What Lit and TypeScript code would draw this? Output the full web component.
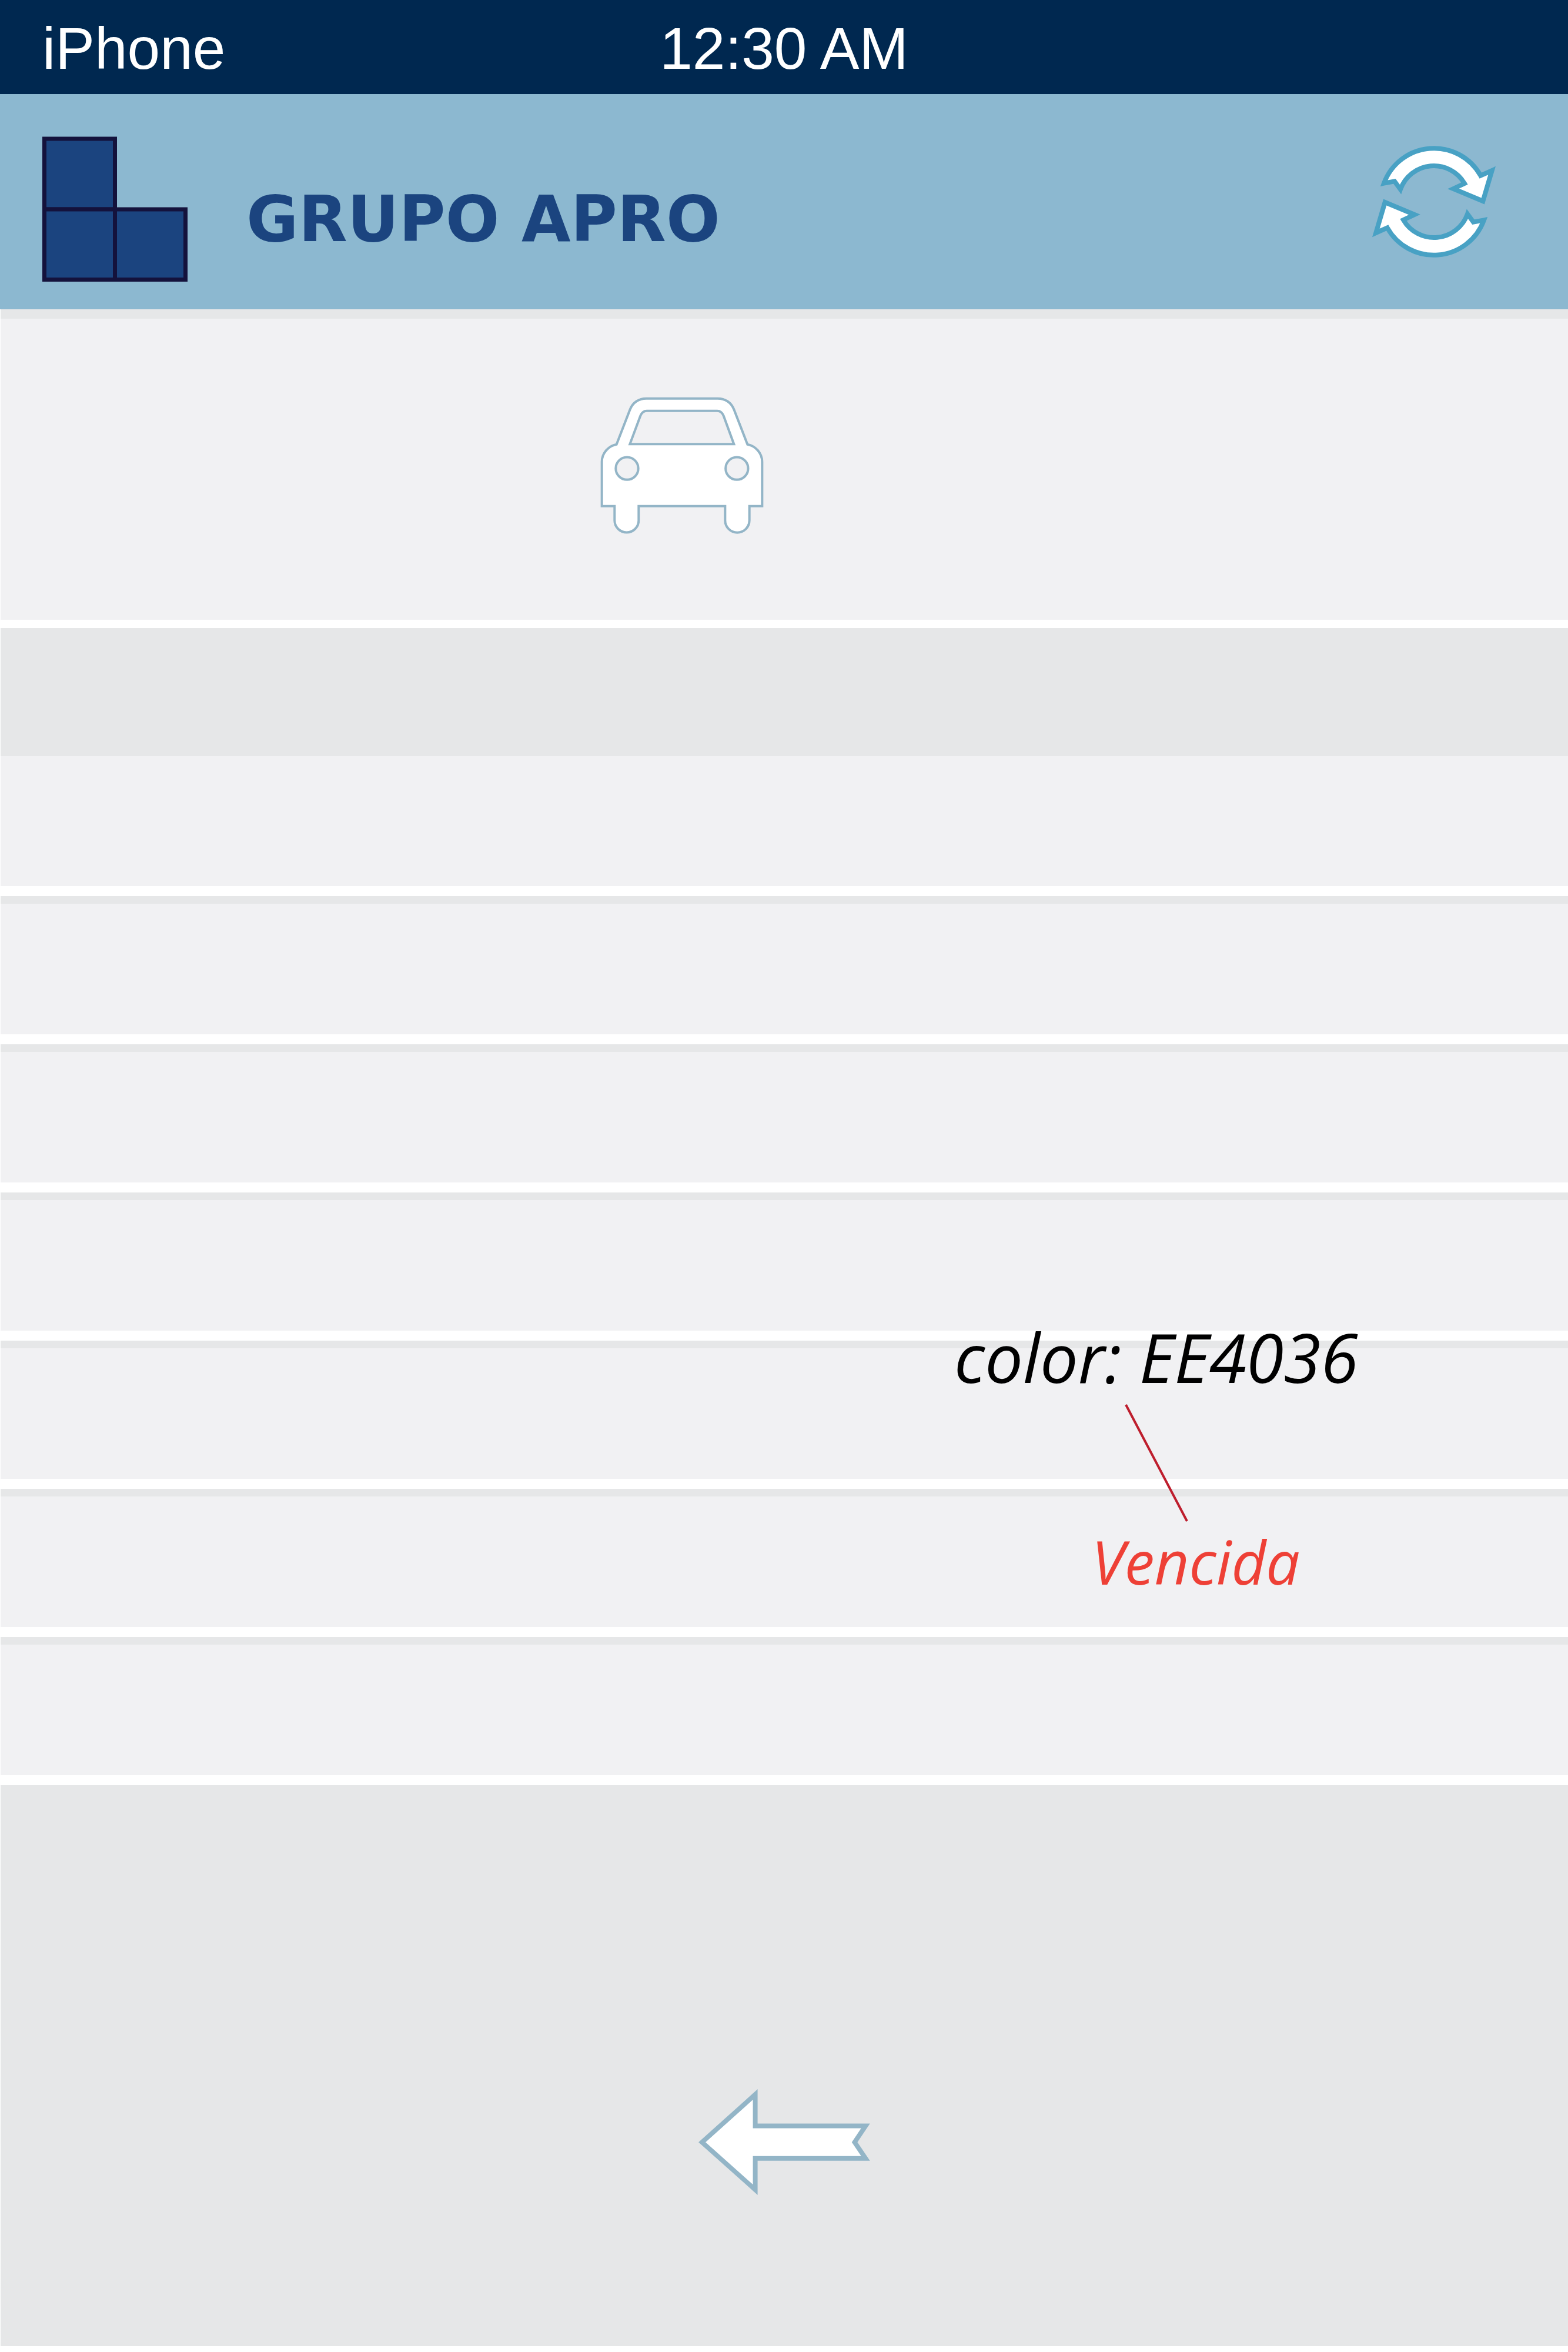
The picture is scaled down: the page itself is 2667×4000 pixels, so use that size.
import { LitElement, html, css } from "lit";
import { customElement, property } from "lit/decorators.js";

@customElement("status-bar")
class StatusBar extends LitElement {
  static styles = css`
    :host {
      display: grid;
      grid-template-columns: 1fr auto 1fr;
      align-items: center;
      height: 160px;
      padding: 4px 72px 0;
      box-sizing: border-box;
      background: #002850;
      color: #fff;
      font: 100px/120px "Liberation Sans", Arial, sans-serif;
    }
  `;
  @property() device = "";
  @property() time = "";
  render() {
    return html`<span>${this.device}</span><time>${this.time}</time>`;
  }
}

@customElement("brand-header")
class BrandHeader extends LitElement {
  static styles = css`
    :host {
      display: flex;
      align-items: center;
      height: 366px;
      padding: 0 122px 0 72px;
      box-sizing: border-box;
      background: #8cb8d0;
    }
    .logo {
      width: 247px;
      height: 247px;
      margin-top: 24px;
      fill: #1b447f;
      stroke: #14123c;
      stroke-width: 7;
    }
    .name {
      flex: 1;
      margin: 60px 0 0 100px;
      color: #1b447f;
      font: bold 108px/120px "DejaVu Sans", Verdana, sans-serif;
      white-space: nowrap;
    }
    .refresh {
      padding: 0;
      border: 0;
      background: none;
      cursor: pointer;
    }
    .refresh svg {
      display: block;
      width: 212px;
      height: 190px;
    }
    .arrows {
      fill: #fff;
      stroke: #48a1c4;
      stroke-width: 24;
      stroke-miterlimit: 10;
    }
  `;
  render() {
    const arrow =
      "M133 274 L187 264 L217 305 A181 181 0 0 1 544 275 L487 302 L638 365 L684 209 L626 235 A272 272 0 0 0 133 274Z";
    return html`
      <svg class="logo" viewBox="0 0 247 247" aria-hidden="true">
        <rect x="3.5" y="4" width="120" height="120" />
        <rect x="3.5" y="124" width="120" height="119.5" />
        <rect x="123.5" y="124" width="120" height="119.5" />
      </svg>
      <h1 class="name">GRUPO APRO</h1>
      <button class="refresh" type="button" aria-label="Actualizar">
        <svg viewBox="70 83 636 570" aria-hidden="true">
          <g class="arrows">
            <path d=${arrow} />
            <path d=${arrow} transform="rotate(180 388 368)" />
          </g>
        </svg>
      </button>
    `;
  }
}

@customElement("car-icon")
class CarIcon extends LitElement {
  static styles = css`
    :host {
      display: block;
    }
    svg {
      display: block;
      width: 278px;
      height: 233px;
      fill: #fff;
      stroke: #93b5c7;
      stroke-width: 12;
    }
    .hole {
      fill: #f1f1f3;
    }
  `;
  render() {
    return html`
      <svg viewBox="65 76 834 699" aria-hidden="true">
        <path
          d="M73 633V407C73 364 106 326 148 318L217 140C231 104 262 84 300 84H664C702 84 733 104 747 140L816 318C858 326 891 364 891 407V633H826V706A62 62 0 0 1 702 706V633H261V706A61.5 61.5 0 0 1 138 706V633Z"
        />
        <path
          class="hole"
          d="M216 317L270 172C277 155 286 147 302 147H662C678 147 687 155 694 172L747 317Z"
        />
        <circle class="hole" cx="201.5" cy="441" r="57.5" />
        <circle class="hole" cx="762" cy="441" r="57.5" />
      </svg>
    `;
  }
}

@customElement("app-root")
class AppRoot extends LitElement {
  static styles = css`
    :host {
      display: flex;
      flex-direction: column;
      min-height: 100vh;
      background: #fff;
    }
    .content {
      flex: 1;
      display: flex;
      flex-direction: column;
      margin-left: 1px;
    }
    .hero {
      display: flex;
      justify-content: center;
      height: 528px;
      padding: 133px 348px 0 0;
      box-sizing: border-box;
      border-top: 16px solid #e6e7e8;
      background: #f1f1f3;
    }
    .band {
      height: 218px;
      margin-top: 14px;
      background: #e6e7e8;
    }
    .rows {
      margin: 0;
      padding: 0;
      list-style: none;
    }
    .row {
      display: flex;
      align-items: center;
      justify-content: flex-end;
      height: 235px;
      margin-bottom: 17px;
      padding-right: 456px;
      box-sizing: border-box;
      border-top: 13px solid #e6e7e8;
      background: #f1f1f3;
    }
    .row:first-child {
      height: 221px;
      border-top: 0;
    }
    .status {
      position: relative;
      color: #ee4036;
      font: italic 102px/120px "Open Sans", "Noto Sans", sans-serif;
    }
    .note {
      position: absolute;
      right: -99px;
      bottom: 328px;
      color: #000;
      font-size: 115px;
      line-height: 160px;
      white-space: nowrap;
    }
    .leader {
      position: absolute;
      right: 190px;
      bottom: 128px;
      width: 108px;
      height: 200px;
      stroke: #be1e2d;
      stroke-width: 4;
    }
    .footer {
      flex: 1;
      display: flex;
      justify-content: center;
      align-items: flex-start;
      padding: 517px 0 200px;
      border-bottom: 10px solid #fff;
      background: #e6e7e8;
    }
    .back {
      padding: 0;
      border: 0;
      background: none;
      cursor: pointer;
    }
    .back svg {
      display: block;
      width: 292px;
      height: 180px;
      fill: #fff;
      stroke: #93b5c7;
      stroke-width: 24;
      stroke-miterlimit: 10;
    }
  `;

  private rows = ["", "", "", "", "", "Vencida", ""];

  render() {
    return html`
      <status-bar device="iPhone" time="12:30 AM"></status-bar>
      <brand-header></brand-header>
      <main class="content">
        <section class="hero"><car-icon></car-icon></section>
        <div class="band"></div>
        <ul class="rows">
          ${this.rows.map(
            (label) => html`<li class="row">
              ${label
                ? html`<span class="status"
                    >${label}
                    <span class="note">color: EE4036</span>
                    <svg class="leader" viewBox="0 0 108 200" aria-hidden="true">
                      <line x1="2" y1="1" x2="106" y2="199" />
                    </svg>
                  </span>`
                : ""}
            </li>`
          )}
        </ul>
        <footer class="footer">
          <button class="back" type="button" aria-label="Volver">
            <svg viewBox="84 100 877 541" aria-hidden="true">
              <path
                d="M102 371L374 127V288H938L882 371L938 454H374V614Z"
              />
            </svg>
          </button>
        </footer>
      </main>
    `;
  }
}
